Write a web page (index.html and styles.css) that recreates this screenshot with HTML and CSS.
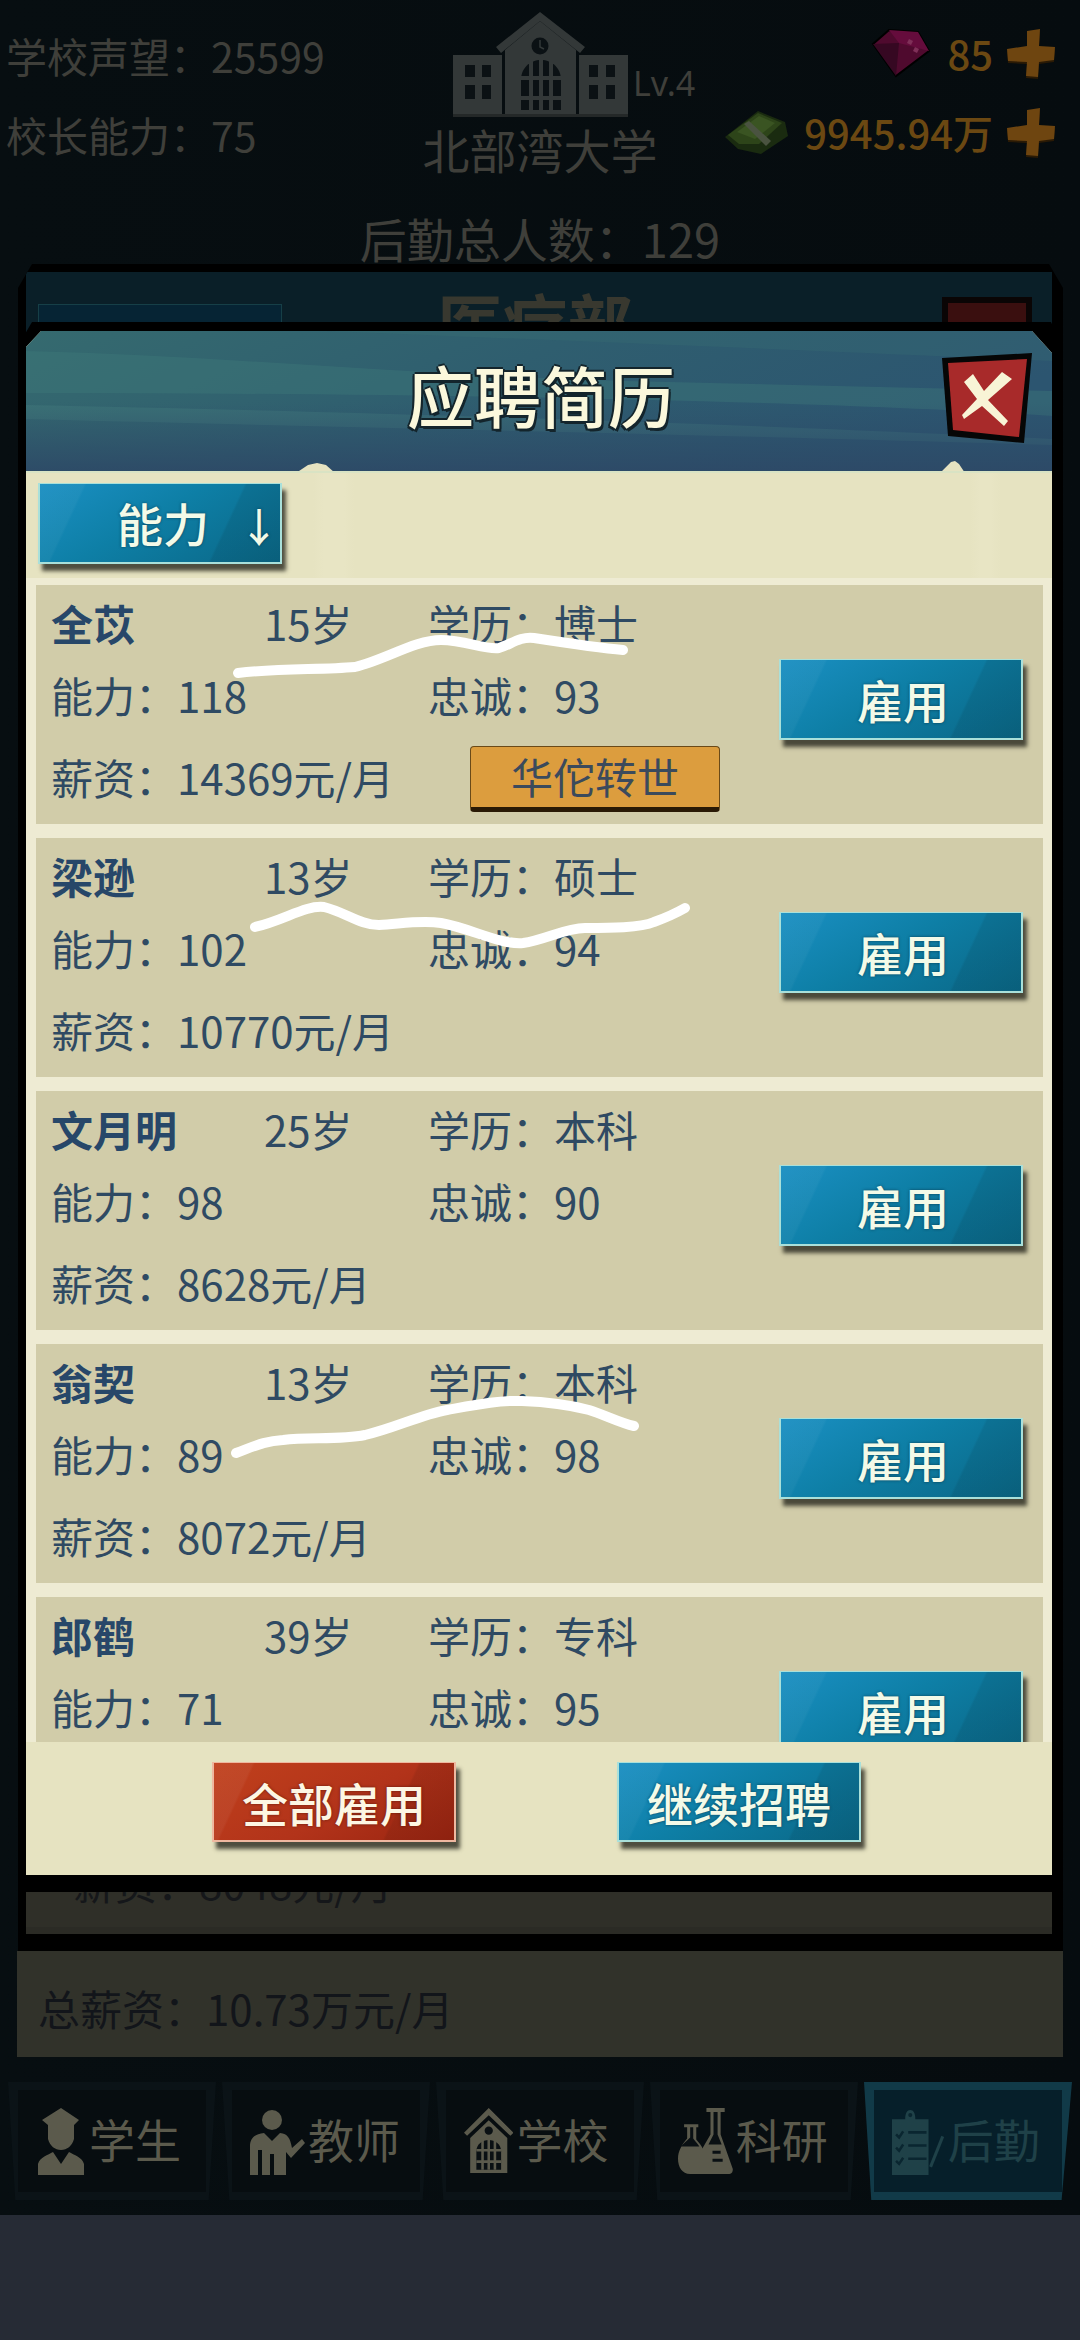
FILE: index.html
```html
<!DOCTYPE html>
<html lang="zh-CN">
<head>
<meta charset="utf-8">
<title>应聘简历</title>
<link rel="stylesheet" href="styles.css">
</head>
<body>
<div class="app">
  <header class="top-bar">
    <div class="stats">
      <div class="stat">学校声望：<span class="num">25599</span></div>
      <div class="stat">校长能力：<span class="num">75</span></div>
    </div>
    <div class="school">
      <svg class="building" viewBox="0 0 175 105">
        <path fill="#333838" d="M0 43H49V103H0ZM126 43H175V103H126ZM52 38L87 9L123 38V103H52Z"/>
        <path fill="#333838" d="M87 0L132 35L127 41L87 9L48 41L43 35Z"/>
        <path fill="#242828" d="M0 102H175V105H0Z"/>
        <circle cx="87" cy="34" r="8.500" fill="#0b1114"/>
        <path stroke="#333838" stroke-width="1.500" fill="none" d="M87 28V35L91 37"/>
        <path fill="#0b1114" d="M12 53H22V65H12ZM29 53H38V65H29ZM12 73H22V87H12ZM29 73H38V87H29ZM136 53H145V65H136ZM153 53H162V65H153ZM136 73H145V87H136ZM153 73H162V87H153Z"/>
        <path fill="#0b1114" d="M68 98V68C68 56 77 48 88 48C99 48 108 56 108 68V98Z"/>
        <path stroke="#333838" stroke-width="4" fill="none" d="M78 48V98M88 48V98M98 48V98M68 66H108M68 86H108"/>
      </svg>
      <span class="level">Lv.4</span>
      <div class="school-name">北部湾大学</div>
    </div>
    <div class="wallet">
      <div class="wallet-row">
        <svg class="gem" viewBox="0 0 60 50">
          <path fill="#4f0a2e" stroke="#000" stroke-width="2" d="M2 15L18 1L47 3L58 22L25 47Z"/>
          <path fill="#650c3c" d="M18 1L47 3L58 22L28 14Z"/>
          <path fill="#360822" d="M2 15L28 14L25 47Z"/>
          <path fill="#7f3058" d="M38 10l4 2-2 4-4-2ZM44 18l4 2-2 4-4-2Z"/>
        </svg>
        <span class="amount">85</span>
        <svg class="plus" viewBox="0 0 48 50"><path fill="#2a1a05" d="M20 4L33 2L32 19L48 20L47 33L32 35L31 50L19 49L20 35L1 34L0 22L20 19Z"/><path fill="#6e4510" d="M20 2L33 0L32 17L48 18L47 31L32 33L31 48L19 47L20 33L1 32L0 20L20 17Z"/></svg>
      </div>
      <div class="wallet-row">
        <svg class="cash" viewBox="0 0 65 46">
          <path fill="#1a2b10" d="M0 27L33 1L60 12L63 26L36 44L13 39Z"/>
          <path fill="#2d4419" d="M3 25L33 3L57 13L34 34L14 34Z"/>
          <path fill="#3a5422" d="M12 22L34 6L50 13L30 29Z"/>
          <path fill="#4a5340" d="M19 14L24 11L46 31L41 36Z"/>
        </svg>
        <span class="amount">9945.94万</span>
        <svg class="plus" viewBox="0 0 48 50"><path fill="#2a1a05" d="M20 4L33 2L32 19L48 20L47 33L32 35L31 50L19 49L20 35L1 34L0 22L20 19Z"/><path fill="#6e4510" d="M20 2L33 0L32 17L48 18L47 31L32 33L31 48L19 47L20 33L1 32L0 20L20 17Z"/></svg>
      </div>
    </div>
  </header>
  <div class="head-count">后勤总人数：<span class="num">129</span></div>

  <section class="panel">
    <div class="panel-head">
      <div class="panel-sort"></div>
      <div class="panel-title">医疗部</div>
      <div class="panel-close"></div>
    </div>
    <div class="panel-body">
      <div class="panel-line">薪资：<span class="num">8048元/月</span></div>
    </div>
  </section>

  <div class="total">总薪资：<span class="num">10.73万元/月</span></div>

  <nav class="nav">
    <div class="nav-item"><div class="nav-inner">
      <svg class="nav-icon" viewBox="0 0 50 67"><path fill="#5b5a4c" d="M25 0L43 12L38 17V31C36 38 31 42 25 42C19 42 14 38 12 31V17L6 12ZM2 56C4 49 12 47 17 44L25 56L33 44C38 47 46 49 48 56V67H2Z"/></svg>
      <span>学生</span>
    </div></div>
    <div class="nav-item"><div class="nav-inner">
      <svg class="nav-icon" viewBox="0 0 55 67"><circle cx="22" cy="12" r="10" fill="#5b5a4c"/><path fill="#5b5a4c" d="M0 67V38C0 30 5 26 14 25L22 33L30 25C38 26 40 30 42 40L52 31L55 35L41 50L36 44V67H24V46H20V67H12V42H8V67Z"/></svg>
      <span>教师</span>
    </div></div>
    <div class="nav-item"><div class="nav-inner">
      <svg class="nav-icon" viewBox="0 0 48 65"><path fill="#5b5a4c" d="M24 0L48 24L45 27L24 7L3 27L0 24Z"/><path fill="#5b5a4c" d="M24 12L42 29V63H6V29Z"/><circle cx="24" cy="22" r="4" fill="#0a1013"/><path fill="#0a1013" d="M12 60V42C12 35 18 31 24 31C30 31 36 35 36 42V60Z"/><path stroke="#5b5a4c" stroke-width="2.500" fill="none" d="M18 31V60M24 31V60M30 31V60M12 41H36M12 52H36"/></svg>
      <span>学校</span>
    </div></div>
    <div class="nav-item"><div class="nav-inner">
      <svg class="nav-icon" viewBox="0 0 54 66"><path fill="#5b5a4c" d="M0 50C0 42 4 36 9 30V19H6V16H20V19H18V31C22 36 24 38 24 40L32 26V4H28V0H46V4H42V26L54 60C54 64 52 65 50 65H12C4 65 0 58 0 50Z"/><path fill="#0a1013" d="M12 19H15V30C18 34 20 36 21 38H3C5 35 8 33 12 29ZM35 4H39V26L43 36H30L35 26Z"/><path fill="#0a1013" d="M34 42H42V45H34ZM34 50H44V53H34Z"/></svg>
      <span>科研</span>
    </div></div>
    <div class="nav-item is-active"><div class="nav-inner">
      <svg class="nav-icon icon-clip" viewBox="0 0 52 66"><path fill="#1f4148" d="M0 11H13C13 5 15 2 18 2C21 2 23 5 23 11H36V66H0Z"/><circle cx="18" cy="7" r="2" fill="#0a2630"/><path stroke="#0a2630" stroke-width="2.500" fill="none" d="M16 24H34M16 37H34M16 50H34M4 26L7 29L11 23M4 39L7 42L11 36M4 52L7 55L11 49"/><path stroke="#1f4148" stroke-width="3" d="M50 28L38 58"/></svg>
      <span>后勤</span>
    </div></div>
  </nav>
</div>
<div class="footer-band"></div>

<div class="modal">
  <div class="modal-inner">
    <div class="modal-head">
      <svg class="head-art" viewBox="0 0 1026 142" preserveAspectRatio="none">
        <defs>
          <linearGradient id="hg" x1="0" y1="0" x2="1" y2="0.3">
            <stop offset="0" stop-color="#356a6f"/>
            <stop offset=".5" stop-color="#2f5e6f"/>
            <stop offset="1" stop-color="#2c5570"/>
          </linearGradient>
          <linearGradient id="hv" x1="0" y1="0" x2="0" y2="1">
            <stop offset=".5" stop-color="#2d4c68" stop-opacity="0"/>
            <stop offset="1" stop-color="#2d4866" stop-opacity=".9"/>
          </linearGradient>
        </defs>
        <rect width="1026" height="142" fill="url(#hg)"/>
        <path fill="#3f7b7a" opacity=".4" d="M0 20C200 25 400 45 600 50L1026 60V85C800 70 400 62 0 62Z"/>
        <path fill="#4a8782" opacity=".32" d="M0 74C300 80 700 92 1026 108V114C700 104 300 96 0 88Z"/>
        <path fill="#3a7275" opacity=".25" d="M300 0H1026V30C800 20 500 8 300 0Z"/>
        <rect width="1026" height="142" fill="url(#hv)"/>
        <path fill="#e6e3c1" d="M270 142L282 134L291 132L300 134L309 142ZM914 142L925 131L929 130L933 133L939 142Z"/>
        <rect y="140" width="1026" height="2" fill="#d9e3c4"/>
      </svg>
      <div class="modal-title">应聘简历</div>
      <svg class="close" viewBox="0 0 90 90">
        <path fill="#060606" d="M0 5L90 0L82 90L6 83Z"/>
        <path fill="#a82a2a" d="M6 10L85 6L77 84L11 77Z"/>
        <path fill="#f8f4d6" d="M60 19L70 26L46 47L66 68L62 73L40 53L22 66L20 62L35 46L22 29L31 21L42 38Z"/>
      </svg>
    </div>
    <div class="sort-bar">
      <button class="btn btn-sort">能力<span class="arrow">↓</span></button>
    </div>
    <div class="list">
      <article class="row">
        <div class="info">
          <div class="name">全苡</div><div>15岁</div><div>学历：<span class="val">博士</span></div>
          <div class="span2">能力：<span class="val">118</span></div><div>忠诚：<span class="val">93</span></div>
          <div class="span2">薪资：<span class="val">14369元/月</span></div><div class="badge">华佗转世</div>
        </div>
        <button class="btn btn-hire">雇用</button>
      </article>
      <article class="row">
        <div class="info">
          <div class="name">梁逊</div><div>13岁</div><div>学历：<span class="val">硕士</span></div>
          <div class="span2">能力：<span class="val">102</span></div><div>忠诚：<span class="val">94</span></div>
          <div class="span2">薪资：<span class="val">10770元/月</span></div>
        </div>
        <button class="btn btn-hire">雇用</button>
      </article>
      <article class="row">
        <div class="info">
          <div class="name">文月明</div><div>25岁</div><div>学历：<span class="val">本科</span></div>
          <div class="span2">能力：<span class="val">98</span></div><div>忠诚：<span class="val">90</span></div>
          <div class="span2">薪资：<span class="val">8628元/月</span></div>
        </div>
        <button class="btn btn-hire">雇用</button>
      </article>
      <article class="row">
        <div class="info">
          <div class="name">翁契</div><div>13岁</div><div>学历：<span class="val">本科</span></div>
          <div class="span2">能力：<span class="val">89</span></div><div>忠诚：<span class="val">98</span></div>
          <div class="span2">薪资：<span class="val">8072元/月</span></div>
        </div>
        <button class="btn btn-hire">雇用</button>
      </article>
      <article class="row">
        <div class="info">
          <div class="name">郎鹤</div><div>39岁</div><div>学历：<span class="val">专科</span></div>
          <div class="span2">能力：<span class="val">71</span></div><div>忠诚：<span class="val">95</span></div>
          <div class="span2">薪资：<span class="val">6048元/月</span></div>
        </div>
        <button class="btn btn-hire">雇用</button>
      </article>
    </div>
    <div class="modal-foot">
      <button class="btn btn-foot btn-red">全部雇用</button>
      <button class="btn btn-foot">继续招聘</button>
    </div>
  </div>
</div>

<svg class="scribbles" viewBox="0 0 1080 2340">
  <path d="M238 673C280 668 320 670 355 667C385 660 415 640 441 640C465 640 485 650 499 648C510 645 520 636 534 638C560 642 600 648 623 650"/>
  <path d="M255 927C285 920 305 905 324 907C345 912 360 925 379 925C400 924 420 920 441 923C470 928 500 945 523 943C545 940 565 928 585 928C610 928 640 928 654 922C668 917 678 912 685 908"/>
  <path d="M236 1453C255 1446 265 1441 283 1440C310 1437 340 1440 365 1435C395 1428 420 1415 447 1410C475 1405 500 1400 522 1401C550 1402 570 1405 589 1410C605 1415 620 1423 634 1426"/>
</svg>
</body>
</html>
```
FILE: styles.css
```css
* { box-sizing: border-box; }
html, body { margin: 0; padding: 0; }
body {
  position: relative;
  width: 1080px;
  height: 2340px;
  overflow: hidden;
  background: #262b35;
  font-family: "Noto Sans CJK SC", "Noto Sans", sans-serif;
  font-size: 42px;
}
.app {
  height: 2215px;
  background: linear-gradient(90deg, #070e11, #060c0f);
  display: flex;
  flex-direction: column;
}
.footer-band { height: 125px; background: #262b35; }

/* top bar */
.top-bar {
  height: 200px;
  display: grid;
  grid-template-columns: 390px 300px 390px;
  color: #3f3f3a;
}
.stats { padding: 16px 0 0 6px; }
.stat { height: 79px; line-height: 79px; white-space: nowrap; font-size: 41px; }
.school { position: relative; display: flex; flex-direction: column; align-items: center; padding-top: 12px; }
.building { width: 175px; height: 105px; display: block; }
.level { position: absolute; left: 243px; top: 58px; font-size: 34px; line-height: 50px; font-family: "Noto Sans", sans-serif; }
.school-name { font-size: 47px; line-height: 58px; margin-top: 3px; }
.wallet { padding: 29px 25px 0 0; display: flex; flex-direction: column; align-items: flex-end; gap: 30px; }
.wallet-row { display: flex; align-items: center; height: 49px; }
.amount { color: #6b4812; font-size: 40px; font-weight: 500; margin: 0 14px; line-height: 49px; }
.gem { width: 60px; height: 50px; margin-right: 2px; }
.cash { width: 65px; height: 46px; margin-right: 0; }
.plus { width: 48px; height: 50px; }

.head-count { height: 64px; line-height: 52px; padding-top: 12px; text-align: center; color: #3f3f3a; font-size: 47px; white-space: nowrap; }

/* covered panel */
.panel {
  height: 1687px;
  margin: 0 17px 0 18px;
  padding: 8px 11px 17px 8px;
  background: #000;
  display: flex;
  flex-direction: column;
  clip-path: polygon(14px 0, calc(100% - 14px) 0, 100% 24px, 100% 100%, 0 100%, 0 24px);
}
.panel-head {
  height: 142px;
  background: #0a1f28;
  display: grid;
  grid-template-columns: 1fr auto 1fr;
  padding: 25px 20px 0 12px;
}
.panel-sort { width: 244px; height: 81px; background: #062434; border: 1px solid #163f47; margin-top: 7px; }
.panel-title { font-size: 65px; line-height: 80px; margin-top: -16px; color: #38382f; font-weight: 700; }
.panel-close { width: 90px; height: 90px; background: #3a0f0f; border: 6px solid #0a0505; justify-self: end; }
.panel-body {
  flex: 1;
  background: #2f2f28;
  border-bottom: 7px solid #2b2b25;
  display: flex;
  align-items: flex-end;
  padding: 0 0 17px 47px;
}
.panel-line { color: #15171a; line-height: 56px; }

.total {
  height: 106px;
  margin: 0 17px;
  padding-left: 21px;
  background: #31322a;
  color: #12151a;
  line-height: 114px;
}

/* bottom nav */
.nav { display: flex; gap: 6px; margin-top: 25px; padding-left: 8px; }
.nav-item {
  width: 208px;
  height: 118px;
  padding: 8px 10px 8px;
  background: #0b1317;
  clip-path: polygon(0 0, 100% 0, 96.500% 100%, 3.500% 100%);
}
.nav-inner {
  height: 100%;
  background: #070d10;
  display: flex;
  align-items: center;
  gap: 3px;
  padding-left: 18px;
  color: #5b5a4c;
  font-size: 46px;
  white-space: nowrap;
}
.nav-icon { height: 67px; width: auto; flex: none; }
.is-active { background: #113a48; clip-path: polygon(0 0, 100% 0, 95% 100%, 3.500% 100%); }
.is-active .nav-inner { background: #061f2a; color: #1f4148; }
.nav-inner span { line-height: 54px; padding-bottom: 6px; }

/* modal */
.modal {
  position: absolute;
  left: 18px;
  top: 322px;
  width: 1045px;
  height: 1570px;
  padding: 9px 11px 17px 8px;
  background: #000;
  clip-path: polygon(14px 0, calc(100% - 12px) 0, 100% 26px, 100% 100%, 0 100%, 0 24px);
}
.modal-inner {
  height: 100%;
  display: flex;
  flex-direction: column;
  background: #e6e3c1;
  clip-path: polygon(15px 0, calc(100% - 20px) 0, 100% 22px, 100% 100%, 0 100%, 0 16px);
}
.modal-head {
  position: relative;
  height: 142px;
  flex: none;
  display: flex;
  justify-content: center;
  align-items: flex-start;
  padding-left: 4px;
}
.head-art { position: absolute; inset: 0; width: 100%; height: 100%; display: block; }
.modal-title {
  position: relative;
  font-size: 67px;
  line-height: 126px;
  font-weight: 500;
  color: #fbf8dc;
  text-shadow: 2px 0 0 #14252c, -2px 0 0 #14252c, 0 2px 0 #14252c, 0 -2px 0 #14252c, 2px 3px 0 #14252c, -2px 2px 0 #14252c;
}
.close { position: absolute; right: 20px; top: 22px; width: 90px; height: 90px; }

.sort-bar {
  height: 105px;
  flex: none;
  padding: 10px 0 0 12px;
  background: linear-gradient(90deg, #e6e3c1 0 28%, #e8e5c4 29% 31%, #e6e3c1 32% 92%, #e8e5c4 93% 94%, #e6e3c1 95%);
}

.btn {
  display: block;
  border: 2px solid #a9e0da;
  border-top-width: 1px;
  padding: 0;
  font-family: inherit;
  font-weight: 500;
  color: #f3fae8;
  font-size: 46px;
  text-shadow: 0 0 3px rgba(10,50,70,.8);
  background:
    linear-gradient(115deg, rgba(255,255,255,.04) 0 16%, transparent 17%),
    linear-gradient(115deg, transparent 74%, rgba(0,0,0,.08) 75%),
    linear-gradient(150deg, #1a8fc2 0%, #0e7fa6 45%, #0a6786 100%);
  box-shadow: 4px 7px 4px rgba(40,40,30,.8);
  white-space: nowrap;
}
.btn-sort { width: 244px; height: 81px; text-align: left; padding-left: 77px; line-height: 76px; }
.arrow { margin-left: 30px; font-size: 40px; }
.btn-hire { width: 244px; height: 81px; flex: none; margin: 74px 0 0 auto; line-height: 78px; padding-left: 4px; }

.list {
  flex: none;
  height: 1164px;
  overflow: hidden;
  background: #eeebd3;
  padding: 7px 9px 0 10px;
  display: flex;
  flex-direction: column;
  gap: 14px;
}
.row {
  flex: none;
  height: 239px;
  padding-right: 20px;
  background: #d1cca9;
  display: flex;
  align-items: flex-start;
  color: #2f4a63;
}
.info {
  padding: 8px 0 0 15px;
  display: grid;
  grid-template-columns: 213px 164px 330px;
  grid-template-rows: 60px 84px 80px;
  align-items: center;
  line-height: 56px;
  white-space: nowrap;
}
.name { font-weight: 700; color: #274769; }
.span2 { grid-column: span 2; }
.badge {
  width: 250px;
  height: 66px;
  margin: 3px 0 0 42px;
  background: #dc9d3e;
  border: 1px solid #6a4a18;
  border-bottom: 5px solid #2a1a05;
  border-radius: 4px;
  text-align: center;
  line-height: 58px;
  color: #3b4a5c;
}

.modal-foot {
  flex: 1;
  display: flex;
  padding: 20px 0 0 186px;
  gap: 161px;
  align-items: flex-start;
  background: #e6e3c1;
}
.btn-foot { width: 244px; height: 80px; line-height: 76px; }
.btn-red {
  border-color: #efb8a0;
  color: #fdf6e3;
  text-shadow: 0 0 3px rgba(80,20,10,.8);
  background:
    linear-gradient(115deg, rgba(255,255,255,.05) 0 14%, transparent 15%),
    linear-gradient(115deg, transparent 74%, rgba(0,0,0,.08) 75%),
    linear-gradient(150deg, #c0401c 0%, #b2331a 55%, #9a2410 100%);
}

.scribbles { position: absolute; left: 0; top: 0; width: 1080px; height: 2340px; pointer-events: none; }
.scribbles path { fill: none; stroke: #fff; stroke-width: 10; stroke-linecap: round; stroke-linejoin: round; }
```
